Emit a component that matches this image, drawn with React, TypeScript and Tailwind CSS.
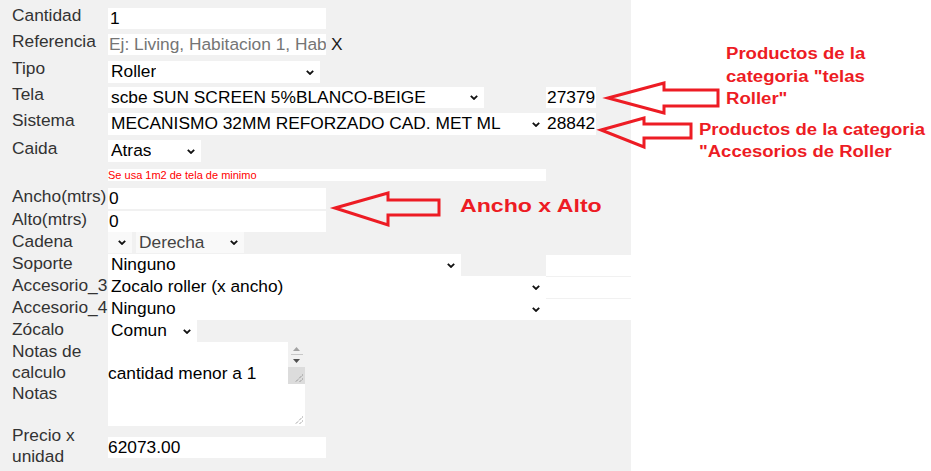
import type { ReactNode } from 'react';

const Chevron = () => (
  <svg width="8" height="5" viewBox="0 0 8 5" className="shrink-0">
    <path d="M0.8 0.8L4 4L7.2 0.8" fill="none" stroke="#111" strokeWidth="1.8" />
  </svg>
);

const Grip = () => (
  <svg width="10" height="10" viewBox="0 0 10 10" className="absolute right-[1px] bottom-[1px]">
    <path d="M9 1.5L1.5 9M9 5.5L5.5 9" stroke="#777" strokeWidth="1" strokeDasharray="1 1" />
  </svg>
);

interface RowProps {
  label: ReactNode;
  className: string;
  labelClass: string;
  children: ReactNode;
}

function Row({ label, className, labelClass, children }: RowProps) {
  return (
    <div className={`flex ${className}`}>
      <div className={`w-[96px] shrink-0 leading-[21px] text-[#333] whitespace-nowrap ${labelClass}`}>
        {label}
      </div>
      <div className="flex items-start">{children}</div>
    </div>
  );
}

interface SelectProps {
  text?: string;
  className: string;
}

function Select({ text, className }: SelectProps) {
  return (
    <div className={`flex items-center justify-between pl-[3px] pr-[6px] ${className}`}>
      <span className="whitespace-nowrap overflow-hidden">{text}</span>
      <Chevron />
    </div>
  );
}

export default function App() {
  return (
    <div className="relative flex h-[471px] w-[931px] overflow-hidden bg-white font-['Liberation_Sans',Arial,sans-serif] text-[17.33px] text-black">
      <div className="w-[631px] shrink-0 bg-[#f1f1f1] pt-[8px] pl-[12px]">
        <Row label="Cantidad" className="h-[21px]" labelClass="-mt-[3px]">
          <div className="flex h-[21px] w-[218px] items-center bg-white pl-[2px]">1</div>
        </Row>

        <Row label="Referencia" className="mt-[5px] h-[21px]" labelClass="-mt-[3px]">
          <div className="flex h-[21px] w-[218px] items-center overflow-hidden whitespace-nowrap bg-white pl-[1px] text-[#757575]">
            Ej: Living, Habitacion 1, Hab
          </div>
          <div className="ml-[5px] flex h-[21px] items-center text-[#1b1b1b]">X</div>
        </Row>

        <Row label="Tipo" className="mt-[6px] h-[22px]" labelClass="-mt-[3px]">
          <Select text="Roller" className="h-[22px] w-[212px] bg-white" />
        </Row>

        <Row label="Tela" className="mt-[4px] h-[21px]" labelClass="-mt-[3px]">
          <Select text="scbe SUN SCREEN 5%BLANCO-BEIGE" className="h-[21px] w-[376px] bg-white" />
          <div className="ml-[62px] flex h-[21px] w-[50px] items-center bg-white pl-[1px]">27379</div>
        </Row>

        <Row label="Sistema" className="mt-[5px] h-[22px]" labelClass="-mt-[3px]">
          <Select text="MECANISMO 32MM REFORZADO CAD. MET ML" className="h-[22px] w-[438px] bg-white" />
          <div className="flex h-[22px] w-[50px] items-center bg-white pl-[1px]">28842</div>
        </Row>

        <Row label="Caida" className="mt-[5px] h-[22px]" labelClass="-mt-[2px]">
          <Select text="Atras" className="h-[22px] w-[93px] bg-white" />
        </Row>

        <div className="mt-[7px] ml-[96px] h-[12px] w-[438px] bg-white text-[11px] leading-[12px] text-[#ff0000]">
          Se usa 1m2 de tela de minimo
        </div>

        <Row label="Ancho(mtrs)" className="mt-[7px] h-[21px]" labelClass="-mt-[2px]">
          <div className="flex h-[21px] w-[218px] items-center bg-white pl-[1px]">0</div>
        </Row>

        <Row label="Alto(mtrs)" className="mt-[2px] h-[21px]" labelClass="-mt-[2px]">
          <div className="flex h-[21px] w-[218px] items-center bg-white pl-[1px]">0</div>
        </Row>

        <Row label="Cadena" className="h-[22px]" labelClass="-mt-[1px]">
          <Select className="h-[21px] w-[24px] justify-end bg-[#f9f9f9]" />
          <div className="ml-[4px] flex h-[21px] w-[108px] items-center justify-between bg-[#f9f9f9] pl-[3px] pr-[6px] text-[#444]">
            <span>Derecha</span>
            <Chevron />
          </div>
        </Row>

        <Row label="Soporte" className="h-[22px]" labelClass="-mt-[1px]">
          <Select text="Ninguno" className="h-[22px] w-[353px] bg-white" />
          <div className="mt-[1px] ml-[85px] h-[21px] w-[85px] bg-white" />
        </Row>

        <Row label="Accesorio_3" className="h-[22px]" labelClass="-mt-[1px]">
          <Select text="Zocalo roller (x ancho)" className="h-[22px] w-[438px] bg-white" />
          <div className="mt-[1px] h-[21px] w-[85px] bg-white" />
        </Row>

        <Row label="Accesorio_4" className="h-[22px]" labelClass="-mt-[1px]">
          <Select text="Ninguno" className="h-[22px] w-[438px] bg-white" />
          <div className="mt-[1px] h-[21px] w-[85px] bg-white" />
        </Row>

        <Row label="Zócalo" className="h-[22px]" labelClass="-mt-[1px]">
          <Select text="Comun" className="h-[22px] w-[89px] bg-white pr-[5px]" />
        </Row>

        <Row label={<>Notas de<br />calculo</>} className="h-[42px]" labelClass="-mt-[1px]">
          <div className="flex h-[42px] w-[197px] bg-white">
            <div className="flex-1 whitespace-nowrap pt-[21px] leading-[20px]">cantidad menor a 1</div>
            <div className="flex w-[17px] flex-col bg-[#f1f1f1]">
              <div className="flex h-[25px] flex-col items-center pt-[5px]">
                <svg width="7" height="4" viewBox="0 0 7 4">
                  <path d="M3.5 0L7 4H0Z" fill="#a3a3a3" />
                </svg>
                <div className="mt-[3px] h-[1px] w-[12px] bg-[#c8c8c8]" />
                <svg width="7" height="4" viewBox="0 0 7 4" className="mt-[4px]">
                  <path d="M0 0H7L3.5 4Z" fill="#505050" />
                </svg>
              </div>
              <div className="relative h-[17px] bg-[#dcdcdc]">
                <Grip />
              </div>
            </div>
          </div>
        </Row>

        <Row label="Notas" className="h-[42px]" labelClass="-mt-[1px]">
          <div className="relative h-[42px] w-[197px] bg-white">
            <Grip />
          </div>
        </Row>

        <Row label={<>Precio x<br />unidad</>} className="mt-[11px] h-[21px]" labelClass="-mt-[12px]">
          <div className="flex h-[21px] w-[218px] items-center bg-white">62073.00</div>
        </Row>
      </div>

      <div className="flex-1 bg-white" />

      <svg
        width="931"
        height="471"
        viewBox="0 0 931 471"
        className="pointer-events-none absolute top-0 left-0"
      >
        <g fill="none" stroke="#ed1c24" strokeWidth="3" strokeLinejoin="miter">
          <path d="M608 98L664 83V90H718V106H664V113Z" />
          <path d="M601 130L644 118V124H691V138H644V147Z" />
          <path d="M335 208L388 193V200H439V215H388V225Z" />
        </g>
      </svg>

      <div className="absolute top-[43px] left-[726px] origin-top-left scale-x-[1.16] text-[16px] font-bold leading-[22.5px] text-[#ed1c24]">
        Productos de la
        <br />
        categoria "telas
        <br />
        Roller"
      </div>

      <div className="absolute top-[119px] left-[699px] origin-top-left scale-x-[1.155] whitespace-nowrap text-[16px] font-bold leading-[22px] text-[#ed1c24]">
        Productos de la categoria
        <br />
        "Accesorios de Roller
      </div>

      <div className="absolute top-[195px] left-[460px] origin-top-left scale-x-[1.25] whitespace-nowrap text-[18.5px] font-bold leading-[22px] text-[#ed1c24]">
        Ancho x Alto
      </div>
    </div>
  );
}
